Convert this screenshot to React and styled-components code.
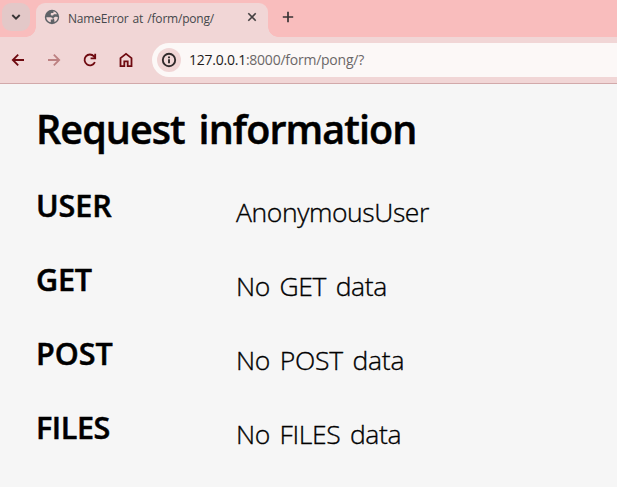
import React from "react";
import styled, { createGlobalStyle } from "styled-components";

const GlobalStyle = createGlobalStyle`
  * { box-sizing: border-box; }
  body { margin: 0; background: #f6f6f6; overflow: hidden; }
`;

const Window = styled.div`
  width: 617px;
  height: 487px;
  overflow: hidden;
  background: #f6f6f6;
  font-family: "Open Sans", "Noto Sans", sans-serif;
  color: #000;
`;

const TabStrip = styled.header`
  display: flex;
  height: 37px;
  background: #f9bdbd;
`;

const TabSearch = styled.button`
  display: grid;
  place-items: center;
  width: 28px;
  height: 28px;
  margin: 3px 6px 0 2px;
  padding: 0;
  border: 0;
  border-radius: 9px;
  background: #e3c8c8;
`;

const Tab = styled.div`
  position: relative;
  display: flex;
  align-items: center;
  width: 232px;
  height: 34px;
  margin-top: 3px;
  padding: 0 11px 6px 8px;
  border-radius: 9px 9px 0 0;
  background: #f1d6d6;

  &::before,
  &::after {
    content: "";
    position: absolute;
    bottom: 0;
    width: 10px;
    height: 10px;
  }
  &::before {
    right: 100%;
    background: radial-gradient(circle at 0 0, transparent 9.5px, #f1d6d6 10px);
  }
  &::after {
    left: 100%;
    background: radial-gradient(circle at 100% 0, transparent 9.5px, #f1d6d6 10px);
  }
`;

const TabTitle = styled.span`
  flex: 1;
  margin-left: 8px;
  padding-top: 3px;
  font-size: 12px;
  line-height: 18px;
  letter-spacing: -0.2px;
  word-spacing: 1.3px;
  color: #45484b;
  white-space: nowrap;
`;

const NewTab = styled.button`
  display: grid;
  place-items: center;
  width: 20px;
  height: 20px;
  margin: 7px 0 0 10px;
  padding: 0;
  border: 0;
  background: none;
`;

const Toolbar = styled.nav`
  display: flex;
  align-items: center;
  height: 47px;
  padding-left: 9px;
  border-bottom: 1px solid #d2a9aa;
  background: #f1d6d6;
`;

const NavButton = styled.button`
  display: grid;
  place-items: center;
  width: 18px;
  height: 18px;
  margin-right: 18px;
  padding: 0;
  border: 0;
  background: none;
  color: ${(p) => (p.$muted ? "#bd8182" : "#6f0a10")};
`;

const AddressBar = styled.div`
  display: flex;
  align-items: center;
  flex: 1;
  height: 34px;
  margin-left: -1px;
  padding-left: 5px;
  border-radius: 17px 0 0 17px;
  background: #fcf8f7;
`;

const SiteInfo = styled.span`
  display: grid;
  place-items: center;
  width: 24px;
  height: 24px;
  margin-right: 8px;
  border-radius: 50%;
  background: #f1d6d6;
`;

const Url = styled.span`
  font-size: 14px;
  line-height: 20px;
  letter-spacing: -0.24px;
  color: #6b6768;
  white-space: nowrap;
`;

const Host = styled.span`
  color: #1f1c1d;
`;

const Page = styled.main`
  padding: 20px 0 0 36px;
`;

const Heading = styled.h2`
  margin: 0 0 31px;
  font-size: 39.5px;
  font-weight: 600;
  line-height: 50px;
  letter-spacing: -0.93px;
  word-spacing: 4.5px;
  white-space: nowrap;
  -webkit-text-stroke: 0.5px #000;
`;

const Row = styled.section`
  display: grid;
  grid-template-columns: 200px 1fr;
  height: 74px;
`;

const Label = styled.h3`
  margin: 0;
  font-size: 30.5px;
  font-weight: 600;
  line-height: 40px;
  letter-spacing: ${(p) => p.$spacing}px;
  -webkit-text-stroke: 0.5px #000;
`;

const Value = styled.p`
  margin: 7px 0 0;
  font-size: 26.5px;
  font-weight: 300;
  line-height: 40px;
  word-spacing: 3px;
  letter-spacing: ${(p) => p.$spacing}px;
  -webkit-text-stroke: 0.35px #000;
`;

const rows = [
  { label: "USER", value: "AnonymousUser", ls: -0.1, vs: -0.4 },
  { label: "GET", value: "No GET data", ls: -0.2, vs: -0.35 },
  { label: "POST", value: "No POST data", ls: 0, vs: -0.25 },
  { label: "FILES", value: "No FILES data", ls: -0.4, vs: -0.35 },
];

const Icon = ({ size, box = 24, children, ...rest }) => (
  <svg width={size} height={size} viewBox={`0 0 ${box} ${box}`} fill="currentColor" aria-hidden="true" {...rest}>
    {children}
  </svg>
);

export default function App() {
  return (
    <Window>
      <GlobalStyle />
      <TabStrip>
        <TabSearch aria-label="Search tabs">
          <Icon size={10} box={10} fill="none" stroke="#373435" strokeWidth="1.9">
            <path d="M1.3 3l3.7 3.7L8.7 3" />
          </Icon>
        </TabSearch>
        <Tab>
          <Icon size={16} box={16} fill="#5f6368">
            <path fillRule="evenodd" d="M8 .8a7.2 7.2 0 1 0 0 14.4A7.2 7.2 0 0 0 8 .8ZM2.3 8.2l4.2.1c1.5 0 2.3.8 2.3 2.1h-2v2.9c-2.6-.4-4.5-2.5-4.5-5.1Zm8.1 4.7v-1.6c0-.8-.4-1.5-1-1.9.5-1.2 1.4-1.8 2.8-1.7l1.6.2c.2 2.1-1.2 4.3-3.4 5ZM8.2 6.6c-.8 0-1.5-.5-1.5-1.3 0-.7.5-1.2 1.2-1.2h1.5l.1-1.8c1.6.4 2.9 1.5 3.6 3L9.8 5.2c-.1.8-.8 1.4-1.6 1.4Z" />
          </Icon>
          <TabTitle>NameError at /form/pong/</TabTitle>
          <Icon size={10} box={10} fill="none" stroke="#444041" strokeWidth="1.6">
            <path d="M1.3 1.3l7.4 7.4M8.7 1.3L1.3 8.7" />
          </Icon>
        </Tab>
        <NewTab aria-label="New tab">
          <Icon size={12} box={12} fill="none" stroke="#393334" strokeWidth="1.7">
            <path d="M6 .8v10.4M.8 6h10.4" />
          </Icon>
        </NewTab>
      </TabStrip>
      <Toolbar>
        <NavButton aria-label="Back">
          <Icon size={18} box={18} fill="none" stroke="currentColor" strokeWidth="1.8">
            <path d="M15 9H4M9.2 3.6L3.8 9l5.4 5.4" />
          </Icon>
        </NavButton>
        <NavButton aria-label="Forward" $muted>
          <Icon size={18} box={18} fill="none" stroke="currentColor" strokeWidth="1.8">
            <path d="M3 9h11M8.8 3.6L14.2 9l-5.4 5.4" />
          </Icon>
        </NavButton>
        <NavButton aria-label="Reload">
          <Icon size={18} box={18} fill="none" stroke="currentColor" strokeWidth="1.8">
            <path d="M13.9 11.1A5.4 5.4 0 1 1 13 5.3l1.2 1.6M14.2 2.7v4.6H9.6" />
          </Icon>
        </NavButton>
        <NavButton aria-label="Home">
          <Icon size={18} box={18} fill="none" stroke="currentColor" strokeWidth="1.8">
            <path d="M3.5 7.1L9 2.9l5.5 4.2v8.1h-3.8v-4.9H7.3v4.9H3.5Z" />
          </Icon>
        </NavButton>
        <AddressBar>
          <SiteInfo>
            <Icon size={16} box={16} fill="none" stroke="#302a2b" strokeWidth="1.9">
              <circle cx="8" cy="8" r="6.2" />
              <path d="M8 7.3v3.9M8 4.5v1.8" />
            </Icon>
          </SiteInfo>
          <Url>
            <Host>127.0.0.1</Host>:8000/form/pong/?
          </Url>
        </AddressBar>
      </Toolbar>
      <Page>
        <Heading>Request information</Heading>
        {rows.map((r) => (
          <Row key={r.label}>
            <Label $spacing={r.ls}>{r.label}</Label>
            <Value $spacing={r.vs}>{r.value}</Value>
          </Row>
        ))}
      </Page>
    </Window>
  );
}
